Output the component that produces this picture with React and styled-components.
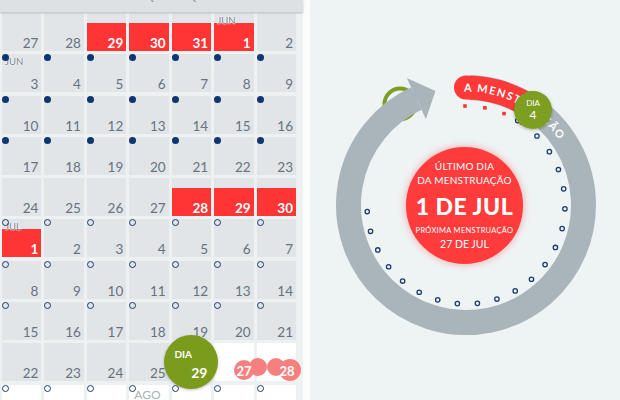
import React from 'react';
import styled, { createGlobalStyle, css } from 'styled-components';

const GlobalStyle = createGlobalStyle`
  html, body {
    margin: 0;
    padding: 0;
  }
  body {
    width: 620px;
    height: 400px;
    overflow: hidden;
    background: #eef3f4;
    font-family: Lato, "Open Sans", sans-serif;
  }
`;

// --- calendar data -------------------------------------------------------

const range = (a, b) => Array.from({ length: b - a + 1 }, (_, i) => a + i);

const week = (days, opts = {}) =>
	days.map((d, i) => ({
		d,
		period: (opts.period || []).includes(i),
		label: (opts.labels || {})[i],
		future: opts.future === true || (opts.future || []).includes(i),
		today: opts.today === i,
		blob: (opts.blobs || {})[i],
	}));

// predicted days drawn as two overlapping bubbles
const blob27 = { x: 20, w: 34, h: 23, circles: [[10, 12, 10], [24, 9, 9]], tx: 10 };
const blob28 = { x: 10, w: 35, h: 24, circles: [[9, 9, 9], [23, 12, 11]], tx: 20 };

const weeks = [
	{ dot: null, days: week([27, 28, 29, 30, 31, 1, 2], { period: [2, 3, 4, 5], labels: { 5: 'JUN' } }) },
	{ dot: 'filled', days: week(range(3, 9), { labels: { 0: 'JUN' } }) },
	{ dot: 'filled', days: week(range(10, 16)) },
	{ dot: 'filled', days: week(range(17, 23)) },
	{ dot: null, days: week(range(24, 30), { period: [4, 5, 6] }) },
	{ dot: 'hollow', days: week(range(1, 7), { period: [0], labels: { 0: 'JUL' } }) },
	{ dot: 'hollow', days: week(range(8, 14)) },
	{ dot: 'hollow', days: week(range(15, 21)) },
	{ dot: null, days: week(range(22, 28), { today: 4, future: [5, 6], blobs: { 5: blob27, 6: blob28 } }) },
	{ dot: 'hollow', days: week([29, 30, 31, 1, 2, 3, 4], { future: true, labels: { 3: 'AGO' } }) },
];

const weekdays = ['D', 'S', 'T', 'Q', 'Q', 'S', 'S'];

// --- layout --------------------------------------------------------------

const Screen = styled.div`
  display: flex;
  width: 620px;
  height: 400px;
  overflow: hidden;
`;

const CalendarPane = styled.div`
  width: 303px;
  flex-shrink: 0;
  background: #edf1f2;
`;

const Divider = styled.div`
  width: 7px;
  flex-shrink: 0;
  background: #fbfcfc;
`;

const WeekdayBar = styled.div`
  position: relative;
  z-index: 3;
  display: grid;
  grid-template-columns: repeat(7, 1fr);
  column-gap: 3px;
  height: 12px;
  padding: 0 7px 0 2px;
  overflow: hidden;
  background: #dde1e4;
  box-shadow: 0 1px 2px rgba(60, 70, 80, 0.3);
`;

const Weekday = styled.span`
  margin-top: -10.5px;
  text-align: center;
  font-size: 12px;
  line-height: 12px;
  color: #8b959d;
`;

const MonthGrid = styled.div`
  display: grid;
  grid-template-columns: repeat(7, 1fr);
  grid-auto-rows: 38px;
  column-gap: 3px;
  row-gap: 3.3px;
  padding: 1px 7px 0 2px;
`;

const DayCell = styled.div`
  position: relative;
  display: flex;
  flex-direction: column;
  justify-content: flex-end;
  background: ${(p) => (p.$future ? '#ffffff' : '#e1e5e8')};
`;

const DayNum = styled.span`
  align-self: flex-end;
  padding: 0 3px 1px 0;
  font-size: 13.5px;
  line-height: 13px;
  color: #67737f;
`;

const FlowBar = styled.div`
  height: 28px;
  display: flex;
  align-items: flex-end;
  justify-content: flex-end;
  background: #ff3434;

  ${DayNum} {
    color: #fff;
    font-weight: 700;
  }
`;

const Marker = styled.span`
  position: absolute;
  top: 0;
  left: 0;
  z-index: 1;
  width: 7px;
  height: 7px;
  box-sizing: border-box;
  border-radius: 50%;
  ${(p) =>
		p.$hollow
			? css`
					border: 1.5px solid #1d3d6e;
			  `
			: css`
					background: #0f3673;
			  `}
`;

const MonthTag = styled.span`
  position: absolute;
  top: ${(p) => (p.$wide ? 4 : 3)}px;
  left: ${(p) => (p.$wide ? 5 : 3)}px;
  z-index: 1;
  font-size: ${(p) => (p.$wide ? 12 : 9.5)}px;
  line-height: 1;
  color: ${(p) => (p.$wide ? '#a9b2b9' : '#74808b')};
  text-shadow: ${(p) => (p.$halo ? '0 0 1px #fff, 0 0 1px #fff, 0 0 2px #fff' : 'none')};
`;

const TodayBadge = styled.div`
  position: absolute;
  left: 50%;
  top: 50%;
  z-index: 2;
  width: 54px;
  height: 54px;
  margin: -27px 0 0 -27px;
  box-sizing: border-box;
  padding: 14px 11px 9px 10px;
  display: flex;
  flex-direction: column;
  justify-content: space-between;
  border-radius: 50%;
  background: #7b9b1d;
  box-shadow: 0 1px 3px rgba(0, 0, 0, 0.25);
  color: #fff;
  font-weight: 700;
`;

const BadgeLabel = styled.span`
  align-self: flex-start;
  font-size: 10px;
  line-height: 10px;
`;

const BadgeNum = styled.span`
  align-self: flex-end;
  font-size: 14px;
  line-height: 14px;
`;

const Blob = styled.svg`
  position: absolute;
  top: 15px;
  left: ${(p) => p.$x}px;
  z-index: 1;
  overflow: visible;
`;

const CyclePane = styled.div`
  flex: 1;
  padding: 55px 0 0 6px;
  background: #eef3f4;
`;

const Dial = styled.div`
  display: grid;
  width: 300px;
  height: 300px;

  & > * {
    grid-area: 1 / 1;
  }
`;

const DialArt = styled.svg`
  display: block;
  overflow: visible;
`;

const Disc = styled.div`
  place-self: center;
  width: 117px;
  height: 117px;
  margin-right: 3px;
  display: flex;
  flex-direction: column;
  align-items: center;
  justify-content: center;
  border-radius: 50%;
  background: #ff3b3b;
  box-shadow: 0 0 6px 1px rgba(255, 60, 60, 0.35);
  color: #fff;
  text-align: center;
`;

const DiscCaption = styled.span`
  font-size: 10px;
  line-height: 14px;
  letter-spacing: 0.2px;
`;

const DiscDate = styled.span`
  font-size: 23px;
  line-height: 38px;
  font-weight: 900;
  letter-spacing: 0.5px;
`;

const DiscSmall = styled.span`
  font-size: 7.5px;
  line-height: 12px;
  letter-spacing: 0.3px;
`;

const DiscNext = styled.span`
  font-size: 10.5px;
  line-height: 14px;
`;

// --- dial geometry -------------------------------------------------------

const C = 150;
const pt = (r, a) => {
	const t = (a * Math.PI) / 180;
	return [C + r * Math.cos(t), C + r * Math.sin(t)];
};
const arc = (r, a0, a1) => {
	const [x0, y0] = pt(r, a0);
	const [x1, y1] = pt(r, a1);
	const large = a1 - a0 > 180 ? 1 : 0;
	return `M${x0} ${y0} A${r} ${r} 0 ${large} 1 ${x1} ${y1}`;
};

const arrowHead = [pt(140, -115), pt(118, -105), pt(95, -115)].map((p) => p.join(',')).join(' ');
const flowDots = [-90.6, -79, -67.4, -55.8];
const cycleDots = [-58.5, ...Array.from({ length: 20 }, (_, i) => -44.2 + i * 11.6)];

function DayBox({ day, dot }) {
	const num = <DayNum>{day.d}</DayNum>;
	return (
		<DayCell $future={day.future}>
			{day.label && (
				<MonthTag $halo={day.period || day.label === 'JUN'} $wide={day.label === 'AGO'}>
					{day.label}
				</MonthTag>
			)}
			{dot && <Marker $hollow={dot === 'hollow'} />}
			{day.today ? (
				<TodayBadge>
					<BadgeLabel>DIA</BadgeLabel>
					<BadgeNum>29</BadgeNum>
				</TodayBadge>
			) : day.blob ? (
				<Blob $x={day.blob.x} width={day.blob.w} height={day.blob.h}>
					{day.blob.circles.map(([cx, cy, r], i) => (
						<circle key={i} cx={cx} cy={cy} r={r} fill="#f5807f" />
					))}
					<text x={day.blob.tx} y="18" textAnchor="middle" fill="#fff" fontSize="13" fontWeight="700" fontFamily="Lato, sans-serif">
						{day.d}
					</text>
				</Blob>
			) : day.period ? (
				<FlowBar>{num}</FlowBar>
			) : (
				num
			)}
		</DayCell>
	);
}

function CycleDial() {
	return (
		<Dial>
			<DialArt width="300" height="300" viewBox="0 0 300 300">
				<defs>
					<filter id="lift" x="-50%" y="-50%" width="200%" height="200%">
						<feDropShadow dx="0" dy="1" stdDeviation="1.5" floodColor="#000" floodOpacity="0.3" />
					</filter>
					<path id="label-arc" d={arc(113.5, -91, -5)} />
				</defs>

				<circle cx="84" cy="49" r="15.5" fill="none" stroke="#7e9e22" strokeWidth="4" />
				<path d={arc(117.5, -88, 245)} fill="none" stroke="#a9b4bb" strokeWidth="25" />
				<polygon points={arrowHead} fill="#a9b4bb" />
				<path d={arc(117.5, -90, -57)} fill="none" stroke="#ff3838" strokeWidth="24" strokeLinecap="round" />
				<text fill="#fff" fontSize="11" fontWeight="700" letterSpacing="1.4" fontFamily="Lato, sans-serif">
					<textPath href="#label-arc">A MENSTRUAÇÃO</textPath>
				</text>

				{flowDots.map((a) => {
					const [x, y] = pt(99, a);
					return <rect key={a} x={x - 1.8} y={y - 1.8} width="3.6" height="3.6" fill="#ff3434" />;
				})}
				{cycleDots.map((a) => {
					const [x, y] = pt(99, a);
					return <circle key={a} cx={x} cy={y} r="2.2" fill="#eef3f4" stroke="#1e3c6e" strokeWidth="1.3" />;
				})}

				<g filter="url(#lift)">
					<circle cx="217" cy="55" r="19" fill="#7e9e22" />
				</g>
				<text x="217" y="50.5" textAnchor="middle" fill="#fff" fontSize="8" fontFamily="Lato, sans-serif">
					DIA
				</text>
				<text x="217" y="64" textAnchor="middle" fill="#fff" fontSize="12" fontFamily="Lato, sans-serif">
					4
				</text>
			</DialArt>

			<Disc>
				<DiscCaption>ÚLTIMO DIA</DiscCaption>
				<DiscCaption>DA MENSTRUAÇÃO</DiscCaption>
				<DiscDate>1 DE JUL</DiscDate>
				<DiscSmall>PRÓXIMA MENSTRUAÇÃO</DiscSmall>
				<DiscNext>27 DE JUL</DiscNext>
			</Disc>
		</Dial>
	);
}

export default function App() {
	return (
		<>
			<GlobalStyle />
			<Screen>
				<CalendarPane>
					<WeekdayBar>
						{weekdays.map((w, i) => (
							<Weekday key={i}>{w}</Weekday>
						))}
					</WeekdayBar>
					<MonthGrid>
						{weeks.map((wk, r) =>
							wk.days.map((day, c) => <DayBox key={`${r}-${c}`} day={day} dot={wk.dot} />)
						)}
					</MonthGrid>
				</CalendarPane>
				<Divider />
				<CyclePane>
					<CycleDial />
				</CyclePane>
			</Screen>
		</>
	);
}
